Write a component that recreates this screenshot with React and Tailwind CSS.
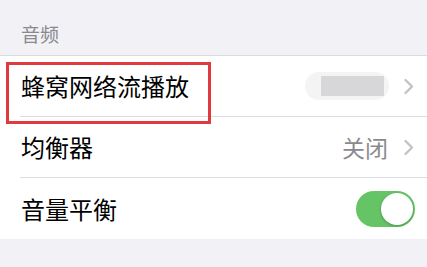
import React from 'react';

const Chevron = () => (
  <svg width="11" height="17" viewBox="0 0 11 17" className="shrink-0">
    <path d="M2.5 2l6.5 6.5L2.5 15" fill="none" stroke="#c3c3c7" strokeWidth="2.4" strokeLinecap="round" strokeLinejoin="round" />
  </svg>
);

const App = () => {
  return (
    <div className="w-[427px] h-[267px] bg-[#f1f1f6] overflow-hidden" style={{ fontFamily: '"Noto Sans CJK SC", "Noto Sans", sans-serif' }}>
      {/* section header */}
      <div className="h-[56px] flex items-end pl-[21px] pb-[9px] border-b border-[#dcdce0]">
        <span className="text-[19px] leading-[24px] text-[#8a8a8e]">音频</span>
      </div>

      <div className="bg-white relative">
        {/* cellular streaming */}
        <div className="pl-[20px]">
          <div className="h-[61px] flex items-center justify-between pr-[13px] border-b border-[#dedee2]">
            <span className="pl-[1px] text-[24px] leading-none text-black">蜂窝网络流播放</span>
            <div className="flex items-center gap-[14px]">
              <div className="w-[84px] h-[28px] rounded-full bg-[#f4f4f5] flex items-center justify-end pr-[5px]">
                <div className="w-[63px] h-[20px] bg-[#d7d7d9]" />
              </div>
              <Chevron />
            </div>
          </div>
        </div>

        {/* equalizer */}
        <div className="pl-[20px]">
          <div className="h-[61px] flex items-center justify-between pr-[13px] border-b border-[#dedee2]">
            <span className="pl-[1px] text-[24px] leading-none text-black">均衡器</span>
            <div className="flex items-center gap-[15px]">
              <span className="text-[23px] leading-none text-[#8a8a8e]">关闭</span>
              <Chevron />
            </div>
          </div>
        </div>

        {/* volume balance */}
        <div className="pl-[20px]">
          <div className="h-[61px] flex items-center justify-between pr-[12px]">
            <span className="pl-[1px] text-[24px] leading-none text-black">音量平衡</span>
            <div className="w-[59px] h-[36px] rounded-full bg-[#65c466] flex items-center justify-end p-[2px]">
              <div className="w-[32px] h-[32px] rounded-full bg-white shadow-[0_1px_3px_rgba(0,0,0,0.25)]" />
            </div>
          </div>
        </div>

        {/* annotation box */}
        <div className="absolute left-[6px] top-[6px] w-[205px] h-[62px] border-[3px] border-[#e03a3e]" />
      </div>
    </div>
  );
};

export default App;
